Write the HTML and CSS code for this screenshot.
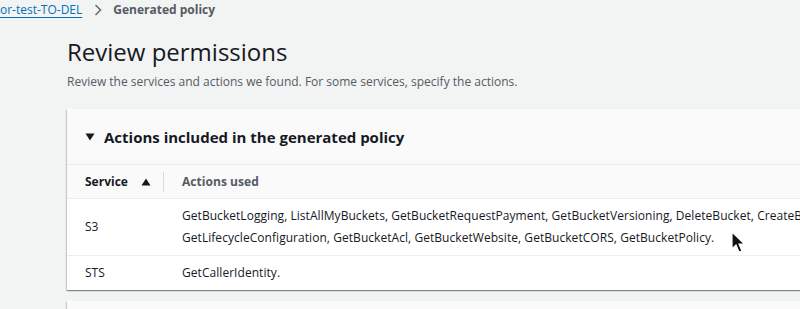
FILE: index.html
```html
<!DOCTYPE html>
<html>
<head>
<meta charset="utf-8">
<link rel="stylesheet" href="styles.css">
</head>
<body>
<nav class="crumbs">
  <a class="crumb-link" href="#">or-test-TO-DEL</a>
  <svg class="chev" width="8" height="12" viewBox="0 0 8 12"><path d="M1.5 1 L6.5 6 L1.5 11" fill="none" stroke="#687078" stroke-width="1.6"/></svg>
  <span class="crumb-current">Generated policy</span>
</nav>
<main class="content">
  <h1 class="title">Review permissions</h1>
  <p class="desc">Review the services and actions we found. For some services, specify the actions.</p>
  <section class="card">
    <header class="card-head">
      <svg class="caret" width="10" height="8" viewBox="0 0 10 8"><path d="M0.5 0.5 H9.5 L5 7.5 Z" fill="#16191f"/></svg>
      <h2 class="card-title">Actions included in the generated policy</h2>
    </header>
    <div class="table">
      <div class="row thead">
        <div class="cell svc">Service <svg class="sort" width="10" height="8" viewBox="0 0 10 8"><path d="M0.5 7.5 H9.5 L5 0.5 Z" fill="#16191f"/></svg><span class="sep"></span></div>
        <div class="cell act muted">Actions used</div>
      </div>
      <div class="row">
        <div class="cell svc">S3</div>
        <div class="cell act">
          <span class="line">GetBucketLogging, ListAllMyBuckets, GetBucketRequestPayment, GetBucketVersioning, DeleteBucket, CreateBucket, GetBucketLocation,</span>
          <span class="line">GetLifecycleConfiguration, GetBucketAcl, GetBucketWebsite, GetBucketCORS, GetBucketPolicy.</span>
        </div>
      </div>
      <div class="row last">
        <div class="cell svc">STS</div>
        <div class="cell act">GetCallerIdentity.</div>
      </div>
    </div>
  </section>
  <section class="card next"></section>
</main>
<svg class="cursor" width="16" height="24" viewBox="0 0 16 24"><path d="M1 1 L1 18 L5 14 L8 21 L11 20 L8 13 L13.5 13 Z" fill="#111" stroke="#fff" stroke-width="1.2"/></svg>
</body>
</html>
```
FILE: styles.css
```css
html, body {
  margin: 0;
  padding: 0;
}
body {
  background: #f2f3f3;
  font-family: "Open Sans", "Noto Sans", sans-serif;
  color: #16191f;
  width: 800px;
  height: 309px;
  overflow: hidden;
  position: relative;
}
.crumbs {
  display: flex;
  align-items: center;
  height: 19px;
  margin-left: 0;
  font-size: 12px;
  white-space: nowrap;
}
.crumb-link {
  color: #0073bb;
  text-decoration: underline;
  text-underline-offset: 3px;
}
.chev {
  margin: 1px 11px 0 12px;
}
.crumb-current {
  color: #545b64;
  font-weight: 700;
}
.content {
  padding-left: 67px;
}
.title {
  margin: 18px 0 0;
  font-size: 24px;
  font-weight: 400;
  line-height: 30px;
}
.desc {
  margin: 6px 0 0;
  font-size: 12px;
  line-height: 18px;
  color: #545b64;
}
.card {
  margin-top: 18px;
  width: 1000px;
  background: #fafafa;
  box-shadow: 0 1px 1px 0 rgba(0,28,36,0.3), 1px 1px 1px 0 rgba(0,28,36,0.15), -1px 1px 1px 0 rgba(0,28,36,0.15);
}
.card-head {
  display: flex;
  align-items: center;
  height: 55px;
  padding-left: 18px;
  border-bottom: 1px solid #eaeded;
}
.caret {
  margin-right: 9px;
  margin-top: 1px;
}
.card-title {
  margin: 0;
  font-size: 15px;
  font-weight: 700;
  line-height: 22px;
}
.row {
  display: flex;
  align-items: center;
  background: #fff;
  border-bottom: 1px solid #eaeded;
  font-size: 12px;
  line-height: 22px;
}
.row.last {
  border-bottom: none;
  height: 34px;
}
.row.thead {
  background: #fafafa;
  height: 33px;
  font-weight: 700;
}
.cell.svc {
  width: 97px;
  padding-left: 18px;
  display: flex;
  align-items: center;
  position: relative;
  flex: none;
}
.sort {
  margin-left: 13px;
}
.sep {
  position: absolute;
  left: 96px;
  top: 1px;
  width: 1px;
  height: 20px;
  background: #d5dbdb;
}
.cell.act {
  padding: 6px 0;
  display: flex;
  flex-direction: column;
  white-space: nowrap;
  letter-spacing: 0.05px;
}
.row.last .cell.act, .row.thead .cell.act {
  padding: 0;
}
.line {
  display: block;
}
.muted {
  color: #545b64;
}
.card.next {
  margin-top: 11px;
  height: 40px;
}
.cursor {
  position: absolute;
  left: 731px;
  top: 231px;
}
```
